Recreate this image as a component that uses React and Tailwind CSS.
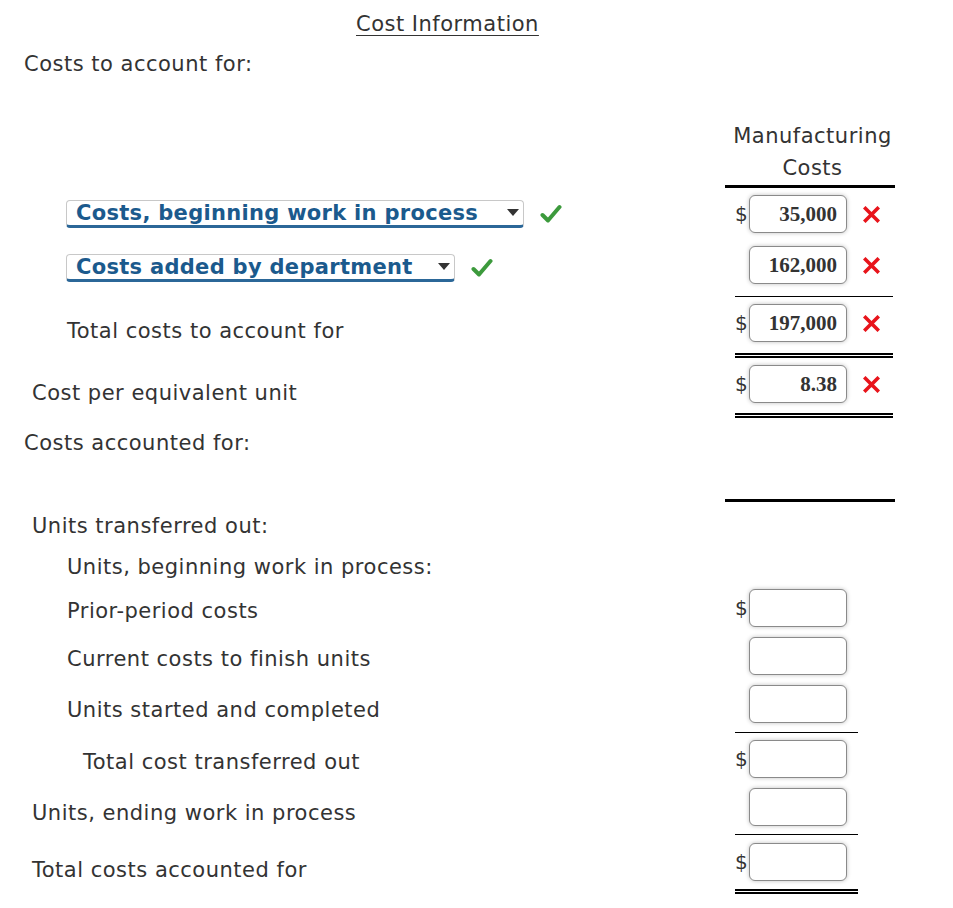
import React from 'react';

const Check = () => (
    <svg width="22" height="20" viewBox="0 0 22 20" className="shrink-0">
        <path d="M2.5 11 L8 16.5 L19.5 3" fill="none" stroke="#3c9a3c" strokeWidth="4" strokeLinecap="round" strokeLinejoin="round" />
    </svg>
);

const Cross = () => (
    <span className="w-[35px] h-[38px] pl-[5px] flex items-center">
        <svg width="17" height="17" viewBox="0 0 17 17">
            <path d="M2.5 2.5 L14.5 14.5 M14.5 2.5 L2.5 14.5" stroke="#e8141b" strokeWidth="3.6" strokeLinecap="square" />
        </svg>
    </span>
);

const Money = ({ dollar, value }) => (
    <div className="flex items-center">
        <span className="w-[14px] text-[20px] leading-[38px] tracking-normal text-[#333]">{dollar ? '$' : ''}</span>
        <div className="w-[98px] h-[38px] rounded-[6px] border border-[#8a8a8a] bg-white shadow-[0_0_4px_rgba(0,0,0,0.25)] flex items-center justify-end pr-[9px] font-['Liberation_Serif',serif] font-bold text-[21px] tracking-normal text-[#333]">
            {value}
        </div>
    </div>
);

const Select = ({ label, width }) => (
    <div className={`flex items-center h-[28px] ${width} rounded-[4px] border border-[#c8c8c8] border-b-[3px] border-b-[#2b6798] bg-white pl-[9px] pr-[4px]`}>
        <span className="flex-1 text-[21px] leading-[24px] font-bold text-[#1b5a8d] whitespace-nowrap tracking-[0.3px]">{label}</span>
        <svg width="12" height="8" viewBox="0 0 12 8"><path d="M0 0 H12 L6 7 Z" fill="#333" /></svg>
    </div>
);

export default function App() {
    return (
        <div className="w-[953px] bg-white font-['DejaVu_Sans',sans-serif] text-[#333] text-[21px] leading-[26px] tracking-[0.5px]">
            {/* Title */}
            <div className="h-[45px] pt-[11px] pl-[356px]">
                <span className="underline underline-offset-[4px] decoration-1">Cost Information</span>
            </div>

            {/* Costs to account for + header */}
            <div className="flex">
                <div className="w-[725px] pl-[24px] pt-[6px]">Costs to account for:</div>
                <div className="w-[170px] pt-[75px]">
                    <div className="border-b-[3px] border-black text-center leading-[32px] pb-[1px] pl-[5px]">
                        <div>Manufacturing</div>
                        <div>Costs</div>
                    </div>
                </div>
            </div>

            {/* Row 1 */}
            <div className="flex h-[52px]">
                <div className="w-[725px] pl-[66px] pt-[12px] flex items-start gap-[16px]">
                    <Select label="Costs, beginning work in process" width="w-[458px]" />
                    <div className="pt-[4px]"><Check /></div>
                </div>
                <div className="pl-[10px] pt-[7px] flex items-start">
                    <Money dollar value="35,000" />
                    <span className="w-[11px]" />
                    <Cross />
                </div>
            </div>

            {/* Row 2 */}
            <div className="flex h-[57px]">
                <div className="w-[725px] pl-[66px] pt-[14px] flex items-start gap-[16px]">
                    <Select label="Costs added by department" width="w-[389px]" />
                    <div className="pt-[4px]"><Check /></div>
                </div>
                <div className="pl-[10px]">
                    <div className="w-[158px] h-full border-b border-black pt-[6px] flex items-start">
                        <Money value="162,000" />
                        <span className="w-[11px]" />
                        <Cross />
                    </div>
                </div>
            </div>

            {/* Row 3 */}
            <div className="flex h-[61px]">
                <div className="w-[725px] pl-[67px] pt-[21px]">Total costs to account for</div>
                <div className="pl-[10px]">
                    <div className="w-[158px] h-full border-b-[5px] border-double border-black pt-[7px] flex items-start">
                        <Money dollar value="197,000" />
                        <span className="w-[11px]" />
                        <Cross />
                    </div>
                </div>
            </div>

            {/* Row 4 */}
            <div className="flex h-[60px]">
                <div className="w-[725px] pl-[32px] pt-[22px]">Cost per equivalent unit</div>
                <div className="pl-[10px]">
                    <div className="w-[158px] h-full border-b-[5px] border-double border-black pt-[7px] flex items-start">
                        <Money dollar value="8.38" />
                        <span className="w-[11px]" />
                        <Cross />
                    </div>
                </div>
            </div>

            {/* Costs accounted for */}
            <div className="flex h-[84px]">
                <div className="w-[725px] pl-[24px] pt-[12px]">Costs accounted for:</div>
                <div className="w-[170px] h-full border-b-[3px] border-black" />
            </div>

            <div className="h-[44px] pl-[32px] pt-[11px]">Units transferred out:</div>
            <div className="h-[40px] pl-[67px] pt-[8px]">Units, beginning work in process:</div>

            {/* Prior-period */}
            <div className="flex h-[48px]">
                <div className="w-[725px] pl-[67px] pt-[12px]">Prior-period costs</div>
                <div className="pl-[10px] pt-[3px]"><Money dollar /></div>
            </div>

            {/* Current costs */}
            <div className="flex h-[48px]">
                <div className="w-[725px] pl-[67px] pt-[12px]">Current costs to finish units</div>
                <div className="pl-[10px] pt-[3px]"><Money /></div>
            </div>

            {/* Units started */}
            <div className="flex h-[51px]">
                <div className="w-[725px] pl-[67px] pt-[15px]">Units started and completed</div>
                <div className="pl-[10px]">
                    <div className="w-[123px] h-full border-b border-black pt-[3px]"><Money /></div>
                </div>
            </div>

            {/* Total transferred */}
            <div className="flex h-[52px]">
                <div className="w-[725px] pl-[83px] pt-[16px]">Total cost transferred out</div>
                <div className="pl-[10px] pt-[7px]"><Money dollar /></div>
            </div>

            {/* Units ending */}
            <div className="flex h-[50px]">
                <div className="w-[725px] pl-[32px] pt-[15px]">Units, ending work in process</div>
                <div className="pl-[10px]">
                    <div className="w-[123px] h-full border-b border-black pt-[3px]"><Money /></div>
                </div>
            </div>

            {/* Total accounted */}
            <div className="flex h-[59px]">
                <div className="w-[725px] pl-[32px] pt-[22px]">Total costs accounted for</div>
                <div className="pl-[10px]">
                    <div className="w-[123px] h-full border-b-[5px] border-double border-black pt-[8px]"><Money dollar /></div>
                </div>
            </div>
            <div className="h-[14px]" />
        </div>
    );
}
